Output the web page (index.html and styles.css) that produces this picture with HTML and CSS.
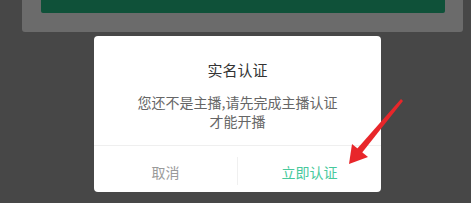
FILE: index.html
```html
<!DOCTYPE html>
<html lang="zh">
<head>
<meta charset="utf-8">
<link rel="stylesheet" href="styles.css">
</head>
<body>
<div class="stage">
  <div class="panel">
    <div class="screen"></div>
  </div>
  <div class="dialog">
    <div class="dialog-body">
      <div class="title">实名认证</div>
      <div class="message">您还不是主播,请先完成主播认证<br>才能开播</div>
    </div>
    <div class="actions">
      <div class="btn cancel">取消</div>
      <div class="sep"></div>
      <div class="btn confirm">立即认证</div>
    </div>
  </div>
  <svg class="arrow" width="471" height="203" viewBox="0 0 471 203">
    <polygon points="401,99 403,101 361,154 356,150" fill="#e8262a"/>
    <polygon points="349,164 352,144 368,157" fill="#e8262a"/>
  </svg>
</div>
</body>
</html>
```
FILE: styles.css
```css
html, body {
  margin: 0;
  padding: 0;
}
body {
  background: #474747;
  font-family: "Noto Sans CJK SC", "Noto Sans", sans-serif;
  width: 471px;
  height: 203px;
  overflow: hidden;
}
.stage {
  position: relative;
  width: 471px;
  height: 203px;
}
.panel {
  margin-left: 22px;
  width: 441px;
  height: 32px;
  background: #6b6b6b;
  border-radius: 0 0 3px 3px;
  overflow: hidden;
}
.screen {
  margin-left: 19px;
  width: 404px;
  height: 13px;
  background: #0f5139;
  border-radius: 0 0 2px 2px;
}
.dialog {
  margin-top: 4px;
  margin-left: 94px;
  width: 287px;
  height: 156px;
  background: #ffffff;
  border-radius: 4px;
  display: flex;
  flex-direction: column;
}
.dialog-body {
  height: 110px;
  box-sizing: border-box;
  padding-top: 24px;
  border-bottom: 1px solid #efefef;
  text-align: center;
}
.title {
  font-size: 15px;
  line-height: 20px;
  color: #333333;
}
.message {
  margin-top: 13px;
  font-size: 14px;
  line-height: 19px;
  color: #666666;
}
.actions {
  flex: 1;
  display: flex;
}
.btn {
  flex: 1;
  display: flex;
  align-items: center;
  justify-content: center;
  padding-top: 6px;
  font-size: 14px;
}
.sep {
  width: 1px;
  margin-top: 11px;
  margin-bottom: 7px;
  background: #f0f0f0;
}
.cancel {
  color: #9a9a9a;
}
.confirm {
  color: #47c99c;
}
.arrow {
  position: absolute;
  left: 0;
  top: 0;
  pointer-events: none;
}
```
